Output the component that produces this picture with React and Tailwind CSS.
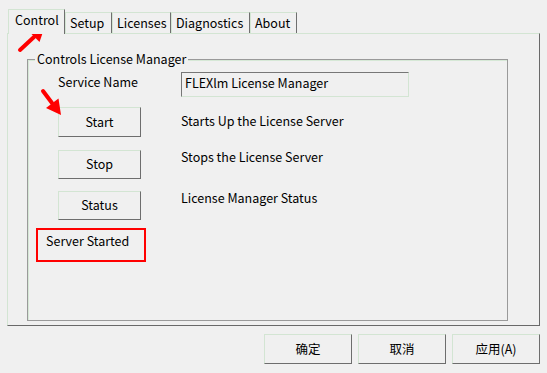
import React from 'react';

const FONT = { fontFamily: '"Noto Sans CJK SC", "Noto Sans", sans-serif' };

function Tab({ label, active, width }) {
  if (active) {
    return (
      <div
        className="relative z-10 -mb-px h-[25px] border-t border-l border-[#d3e5d3] border-r border-r-[#6f6f6f] bg-[#f0f0f0] pl-[6px] text-[12.5px] leading-[20px] text-black"
        style={{ width: width }}
      >
        {label}
      </div>
    );
  }
  return (
    <div
      className="h-[21px] border-t border-l border-[#d3e5d3] border-r border-r-[#6f6f6f] bg-[#f0f0f0] pl-[4px] text-[12.5px] leading-[19px] text-black"
      style={{ width: width }}
    >
      {label}
    </div>
  );
}

function WinButton({ children, className }) {
  return (
    <div
      className={'flex items-center justify-center border border-t-[#d3e5d3] border-l-[#d3e5d3] border-r-[#6d6d6d] border-b-[#6d6d6d] bg-[#f0f0f0] text-[12.5px] text-black ' + className}
    >
      {children}
    </div>
  );
}

export default function App() {
  return (
    <div className="relative h-[373px] w-[547px] overflow-hidden bg-[#f0f0f0] text-black" style={FONT}>
      {/* tab strip */}
      <div className="flex items-end pl-[8px] pt-[9px]">
        <Tab label="Control" active width={57} />
        <Tab label="Setup" width={47} />
        <Tab label="Licenses" width={59} />
        <Tab label="Diagnostics" width={79} />
        <Tab label="About" width={47} />
      </div>

      {/* tab panel */}
      <div className="ml-[7px] h-[293px] w-[533px] border border-t-[#d3e5d3] border-l-[#d3e5d3] border-r-[#696969] border-b-[#696969] pl-[19px] pt-[25px]">
        {/* group box */}
        <div className="relative h-[262px] w-[481px] border border-[#9a9a9a] shadow-[inset_1px_1px_0_#d6e8d6]">
          <div className="absolute left-[7px] top-[-10px] bg-[#f0f0f0] px-[2px] text-[12.5px] leading-[18px]">
            Controls License Manager
          </div>

          <div className="flex pl-[30px] pt-[12px]">
            <div className="w-[123px] pt-[1px] text-[12.5px] leading-[18px]">Service Name</div>
            <div className="flex h-[25px] w-[228px] items-start border border-t-[#777777] border-l-[#777777] border-r-[#d3e5d3] border-b-[#d3e5d3] pl-[3px] pt-[1px] text-[12.5px] leading-[18px]">
              FLEXlm License Manager
            </div>
          </div>

          <div className="mt-[10px] flex pl-[30px]">
            <WinButton className="h-[30px] w-[83px]">Start</WinButton>
            <div className="pl-[40px] pt-[5px] text-[12.5px] leading-[18px]">Starts Up the License Server</div>
          </div>

          <div className="mt-[13px] flex pl-[30px]">
            <WinButton className="h-[29px] w-[83px]">Stop</WinButton>
            <div className="pl-[40px] text-[12.5px] leading-[14px]">Stops the License Server</div>
          </div>

          <div className="mt-[12px] flex pl-[30px]">
            <WinButton className="h-[29px] w-[83px]">Status</WinButton>
            <div className="pl-[40px] text-[12.5px] leading-[14px]">License Manager Status</div>
          </div>

          <div className="ml-[8px] mt-[8px] h-[34px] w-[110px] border-2 border-[#ff0000] pl-[8px] pt-[2px] text-[12.5px] leading-[18px]">
            Server Started
          </div>
        </div>
      </div>

      {/* dialog buttons */}
      <div className="mt-[8px] flex justify-end gap-[6px] pr-[7px]">
        <WinButton className="h-[30px] w-[88px]">确定</WinButton>
        <WinButton className="h-[30px] w-[88px]">取消</WinButton>
        <WinButton className="h-[30px] w-[88px]">应用(A)</WinButton>
      </div>

      {/* annotation arrows */}
      <svg className="pointer-events-none absolute left-0 top-0" width="547" height="373">
        <line x1="20" y1="50" x2="34" y2="37" stroke="#ff0000" strokeWidth="4" strokeLinecap="round" />
        <polygon points="45,26 39.5,42 28.5,31" fill="#ff0000" />
        <line x1="43" y1="91" x2="52" y2="103" stroke="#ff0000" strokeWidth="4" strokeLinecap="round" />
        <polygon points="61,115 58.5,98.5 46,108" fill="#ff0000" />
      </svg>
    </div>
  );
}
